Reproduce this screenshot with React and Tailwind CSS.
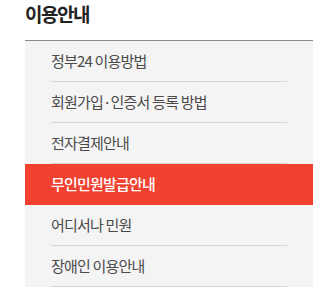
import React from 'react';

const items = [
  '정부24 이용방법',
  '회원가입·인증서 등록 방법',
  '전자결제안내',
  '무인민원발급안내',
  '어디서나 민원',
  '장애인 이용안내',
];

const App = () => {
  const active = 3;

  return (
    <div className="w-[331px] h-[289px] overflow-hidden bg-white" style={{ fontFamily: '"Noto Sans CJK KR", "Noto Sans", sans-serif' }}>
      <div className="pl-[25px] pr-[18px]">
        <h2 className="h-[40px] text-[19px] leading-[28px] font-bold tracking-[-1.5px] text-[#222]">이용안내</h2>
        <ul className="border-t border-[#8a8a8a] bg-[#f4f4f4]">
          {items.map((label, i) => (
            <li key={label} className={i === active ? 'bg-[#f2412f]' : ''}>
              <div
                className={
                  i === active
                    ? 'mx-[26px] h-[41px] flex items-center text-[15px] tracking-[-0.8px] text-white font-medium'
                    : 'mx-[26px] h-[41px] flex items-center text-[15px] tracking-[-0.8px] text-[#4a4a4a] border-b border-[#d6d6d6]'
                }
              >
                {label}
              </div>
            </li>
          ))}
        </ul>
      </div>
    </div>
  );
};

export default App;
